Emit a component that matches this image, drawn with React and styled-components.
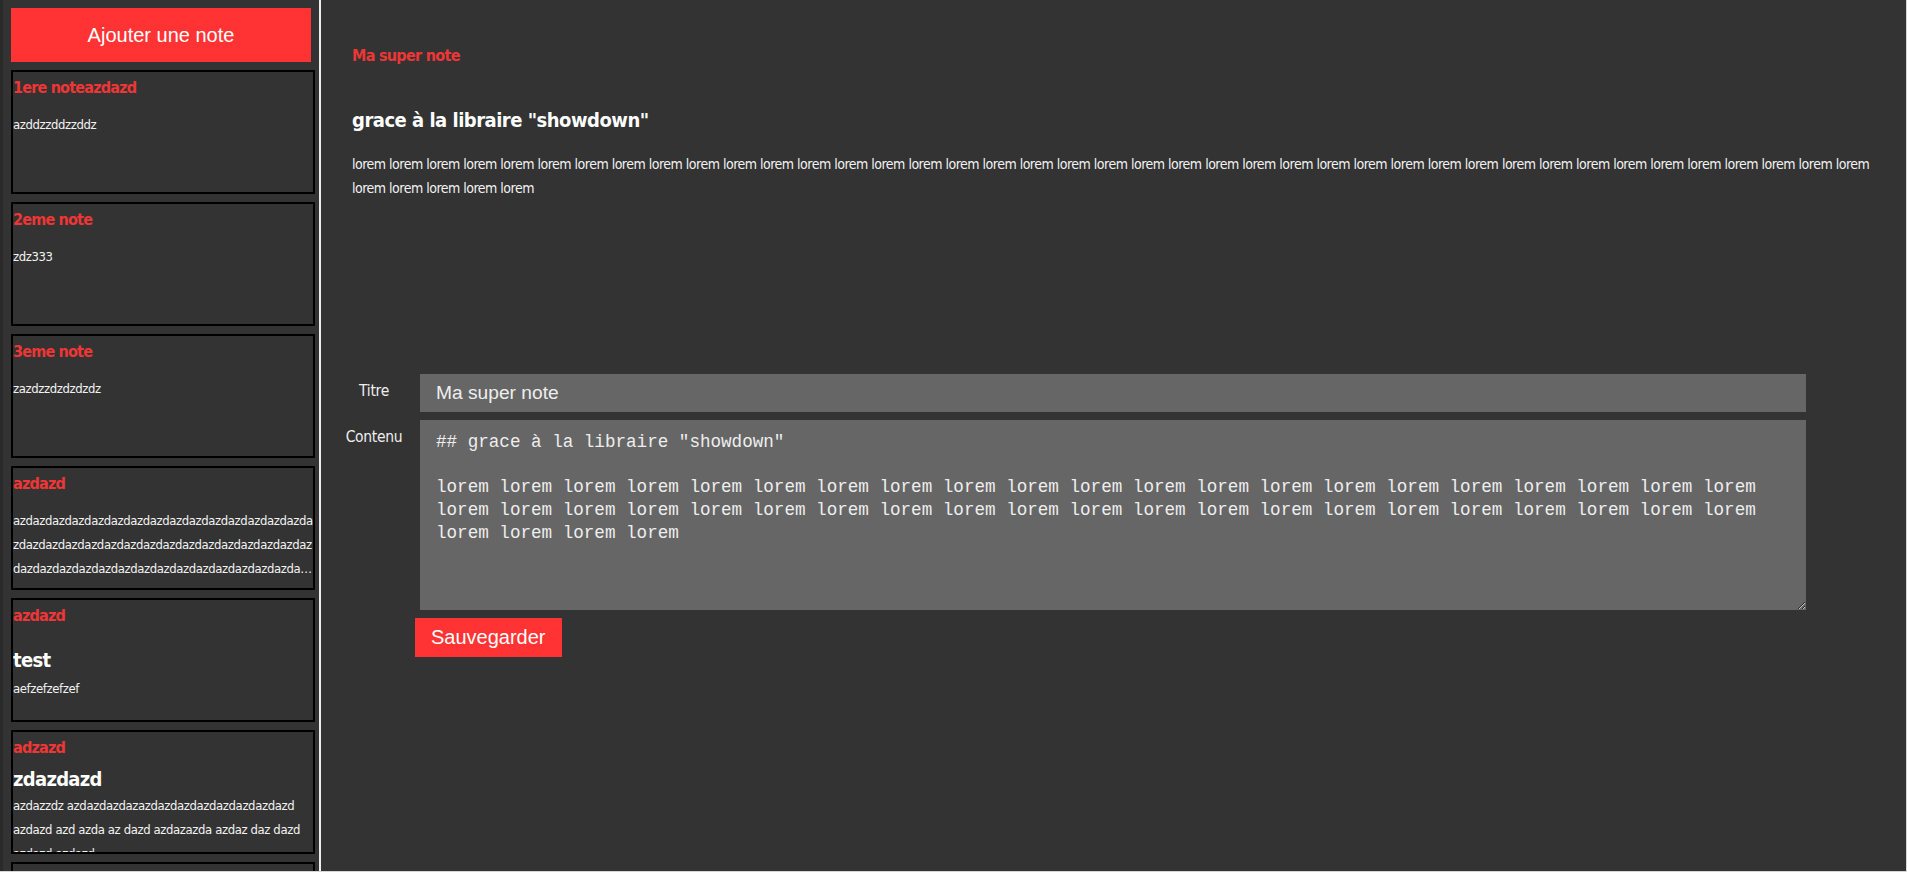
import React from 'react'
import styled, { createGlobalStyle } from 'styled-components'

const GlobalStyle = createGlobalStyle`
	html, body {
		margin: 0;
		background: #fff;
	}
	* {
		box-sizing: border-box;
	}
`

// no Oswald offline: condensed DejaVu, tightened
const narrow = `"DejaVu Sans Condensed", "DejaVu Sans", sans-serif`
const red = '#ee3636'

const lorem = Array(46).fill('lorem').join(' ')

const notes = [
	{ title: '1ere noteazdazd', blocks: [{ type: 'p', text: 'azddzzddzzddz' }] },
	{ title: '2eme note', blocks: [{ type: 'p', text: 'zdz333' }] },
	{ title: '3eme note', blocks: [{ type: 'p', text: 'zazdzzdzdzdzdz' }] },
	{ title: 'azdazd', clamp: true, blocks: [{ type: 'p', text: 'azd'.repeat(60) }] },
	{
		title: 'azdazd',
		blocks: [
			{ type: 'h2', text: 'test', gap: 13 },
			{ type: 'p', text: 'aefzefzefzef', gap: 2 }
		]
	},
	{
		title: 'adzazd',
		blocks: [
			{ type: 'h2', text: 'zdazdazd', gap: 0 },
			{
				type: 'p',
				gap: 0,
				text: 'azdazzdz azdazdazdazazdazdazdazdazdazdazdazd azdazd azd azda az dazd azdazazda azdaz daz dazd azdazd azdazd'
			}
		]
	},
	{ title: 'azdazd', blocks: [{ type: 'p', text: 'azdazd' }] }
]

const App = () => (
	<Page>
		<GlobalStyle />
		<Sidebar>
			<AddButton>Ajouter une note</AddButton>
			{notes.map((n, i) => (
				<Card key={i}>
					<CardTitle>{n.title}</CardTitle>
					{n.blocks.map((b, j) =>
						b.type === 'h2' ? (
							<CardHeading key={j} $gap={b.gap}>{b.text}</CardHeading>
						) : (
							<CardText key={j} $gap={b.gap} $clamp={n.clamp}>{b.text}</CardText>
						)
					)}
				</Card>
			))}
		</Sidebar>

		<Main>
			<Preview>
				<PreviewTitle>Ma super note</PreviewTitle>
				<PreviewHeading>grace à la libraire "showdown"</PreviewHeading>
				<PreviewText>{lorem}</PreviewText>
			</Preview>

			<Form onSubmit={e => e.preventDefault()}>
				<Label htmlFor="titre">Titre</Label>
				<TitleInput id="titre" defaultValue="Ma super note" />
				<Label htmlFor="contenu">Contenu</Label>
				<ContentArea
					id="contenu"
					defaultValue={'## grace à la libraire "showdown"\n\n' + lorem}
				/>
				<SaveButton type="submit">Sauvegarder</SaveButton>
			</Form>
		</Main>
	</Page>
)

const Page = styled.div`
	display: flex;
	height: 872px;
	background: #333;
	border-right: 1px solid #d6d6d6;
	border-bottom: 1px solid #d6d6d6;
	overflow: hidden;
`
const Sidebar = styled.aside`
	flex: 0 0 321px;
	display: flex;
	flex-direction: column;
	gap: 8px;
	padding: 8px 4px 0 8px;
	border-left: 3px solid #2a2a2a;
	border-right: 2px solid #eee;
	overflow: hidden;
`
const AddButton = styled.button`
	flex-shrink: 0;
	width: 300px;
	height: 54px;
	border: 0;
	background: #ff3333;
	color: #fff;
	font-family: "Liberation Sans", Arial, sans-serif;
	font-size: 20px;
	cursor: pointer;
`
const Card = styled.article`
	flex-shrink: 0;
	height: 124px;
	border: 2px solid #000;
	overflow: hidden;
	font-family: ${narrow};
`
const CardTitle = styled.h3`
	margin: 0;
	color: ${red};
	font-size: 16px;
	font-weight: 700;
	letter-spacing: -0.8px;
	line-height: 32px;
`
const CardHeading = styled.h2`
	margin: ${p => p.$gap}px 0 0;
	color: #fff;
	font-size: 20px;
	font-weight: 700;
	letter-spacing: -0.7px;
	line-height: 30px;
`
const CardText = styled.p`
	margin: ${p => (p.$gap === undefined ? 9 : p.$gap)}px 0 0;
	color: #f2f2f2;
	font-size: 13px;
	letter-spacing: -0.4px;
	line-height: 24px;
	word-break: ${p => (p.$clamp ? 'break-all' : 'normal')};
	${p => p.$clamp && `
		display: -webkit-box;
		-webkit-line-clamp: 3;
		-webkit-box-orient: vertical;
		overflow: hidden;
	`}
`
const Main = styled.main`
	flex: 1;
	padding: 41px 30px 0 31px;
	font-family: ${narrow};
`
const Preview = styled.section`
	height: 333px;
`
const PreviewTitle = styled.h3`
	margin: 0;
	color: ${red};
	font-size: 16px;
	font-weight: 700;
	letter-spacing: -0.7px;
	line-height: 30px;
`
const PreviewHeading = styled.h2`
	margin: 33px 0 0;
	color: #fff;
	font-size: 20px;
	font-weight: 700;
	letter-spacing: -0.5px;
	line-height: 32px;
`
const PreviewText = styled.p`
	margin: 17px 0 0;
	color: #f2f2f2;
	font-size: 14px;
	letter-spacing: -0.5px;
	line-height: 23.5px;
`
const Form = styled.form`
	display: grid;
	grid-template-columns: 80px 1386px;
	column-gap: 6px;
	row-gap: 8px;
	margin-left: -18px;
`
const Label = styled.label`
	padding-top: 8px;
	color: #eee;
	font-size: 15.5px;
	letter-spacing: -0.3px;
	text-align: center;
`
const TitleInput = styled.input`
	height: 38px;
	padding: 0 16px;
	border: 0;
	outline: none;
	background: #666;
	color: #eee;
	font-family: "Liberation Sans", Arial, sans-serif;
	font-size: 19.2px;
`
const ContentArea = styled.textarea`
	height: 190px;
	padding: 11px 16px;
	border: 0;
	outline: none;
	background: #666;
	color: #eee;
	font-family: "Liberation Mono", "DejaVu Sans Mono", monospace;
	font-size: 17.6px;
	line-height: 22.7px;
`
const SaveButton = styled.button`
	grid-column: 2;
	justify-self: start;
	margin-left: -5px;
	height: 39px;
	padding: 0 16px;
	border: 0;
	background: #ff3333;
	color: #fff;
	font-family: "Liberation Sans", Arial, sans-serif;
	font-size: 20px;
	cursor: pointer;
`

export default App
